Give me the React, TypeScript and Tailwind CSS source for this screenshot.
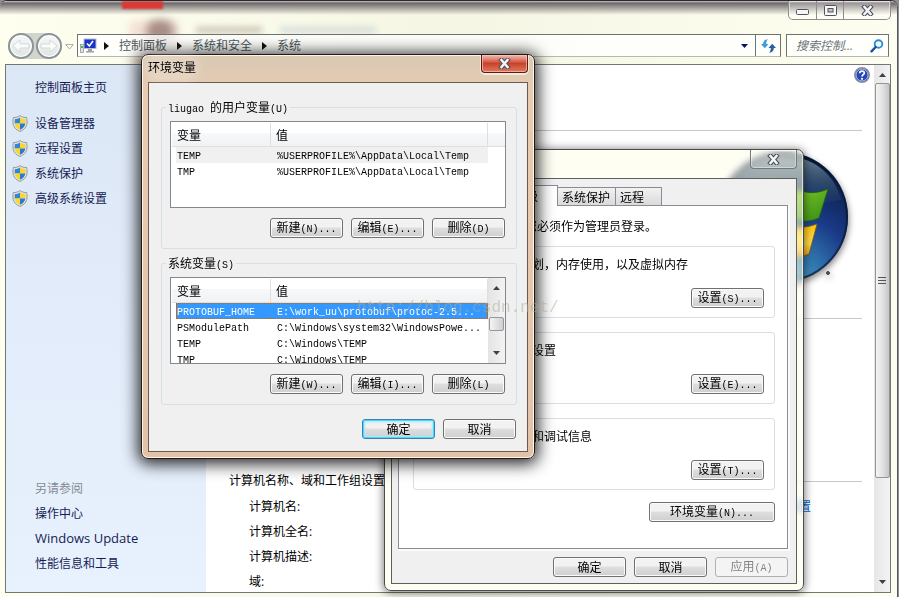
import React, { useState } from 'react';
import clsx from 'clsx';

interface Variable {
  name: string;
  value: string;
}

const userVariables: Variable[] = [
  { name: 'TEMP', value: '%USERPROFILE%\\AppData\\Local\\Temp' },
  { name: 'TMP', value: '%USERPROFILE%\\AppData\\Local\\Temp' },
];

const systemVariables: Variable[] = [
  { name: 'PROTOBUF_HOME', value: 'E:\\work_uu\\protobuf\\protoc-2.5...' },
  { name: 'PSModulePath', value: 'C:\\Windows\\system32\\WindowsPowe...' },
  { name: 'TEMP', value: 'C:\\Windows\\TEMP' },
  { name: 'TMP', value: 'C:\\Windows\\TEMP' },
];

const tasks = ['设备管理器', '远程设置', '系统保护', '高级系统设置'];
const seeAlso = ['操作中心', 'Windows Update', '性能信息和工具'];
const breadcrumbs = ['控制面板', '系统和安全', '系统'];

// Latin runs go in a half-width monospace, Chinese stays at full width
const Mixed: React.FC<{ text: string }> = ({ text }) => (
  <>
    {text.split(/([\x20-\x7e]+)/).filter(Boolean).map((part, i) =>
      /^[\x20-\x7e]+$/.test(part) ? (
        <span key={i} className="font-['Liberation_Mono',monospace] text-[10px] whitespace-pre">{part}</span>
      ) : (
        <span key={i}>{part}</span>
      )
    )}
  </>
);

const CloseGlyph = () => (
  <svg width="13" height="11" viewBox="0 0 13 11" aria-hidden="true">
    <path d="M3.500 2 L9.500 9 M9.500 2 L3.500 9" stroke="#4b4f5e" strokeWidth="4.600" strokeLinecap="square" />
    <path d="M3.500 2 L9.500 9 M9.500 2 L3.500 9" stroke="#f4f4f4" strokeWidth="2.600" strokeLinecap="square" />
  </svg>
);

const Shield = () => (
  <svg width="16" height="17" viewBox="0 0 16 17" className="shrink-0" aria-hidden="true">
    <path d="M8 .6 C6 2 3.600 2.700 1.300 2.500 C1.300 4 .7 5 1 8 C1.300 12 4 15 8 16.400 C12 15 14.700 12 15 8 C15.300 5 14.700 4 14.700 2.500 C12.400 2.700 10 2 8 .6Z" fill="#e2e0d8" stroke="#8d9294" strokeWidth=".9" />
    <path d="M8 2.400 C6.500 3.400 4.700 4 3 4 C2.900 5.500 2.500 7 2.700 8.500 H8Z" fill="#2e86d8" />
    <path d="M8 2.400 C9.500 3.400 11.300 4 13 4 C13.100 5.500 13.500 7 13.300 8.500 H8Z" fill="#fbd628" />
    <path d="M2.700 8.500 C3.100 11.500 5 13.500 8 14.800 V8.500Z" fill="#fbd628" />
    <path d="M13.300 8.500 C12.900 11.500 11 13.500 8 14.800 V8.500Z" fill="#2a7bd0" />
  </svg>
);

const WindowsLogo = () => (
  <svg width="132" height="132" viewBox="0 0 132 132" className="drop-shadow-[1px_3px_3px_rgba(0,0,0,0.45)]" aria-hidden="true">
    <defs>
      <radialGradient id="orb" cx=".48" cy="1.050" r="1">
        <stop offset="0" stopColor="#62c0dc" />
        <stop offset=".28" stopColor="#3580b6" />
        <stop offset=".6" stopColor="#1a3a88" />
        <stop offset="1" stopColor="#071a3e" />
      </radialGradient>
      <linearGradient id="gloss" x1="0" y1="0" x2="0" y2="1">
        <stop offset="0" stopColor="#7f98a6" stopOpacity=".85" />
        <stop offset="1" stopColor="#33566e" stopOpacity=".15" />
      </linearGradient>
      <linearGradient id="green" x1="0" y1="0" x2="1" y2="1">
        <stop offset="0" stopColor="#8fd32c" />
        <stop offset="1" stopColor="#2f8a13" />
      </linearGradient>
      <linearGradient id="yellow" x1="0" y1="0" x2="0" y2="1">
        <stop offset="0" stopColor="#ffc20a" />
        <stop offset=".6" stopColor="#ffdc4a" />
        <stop offset="1" stopColor="#f39a08" />
      </linearGradient>
    </defs>
    <circle cx="65" cy="65" r="65" fill="url(#orb)" />
    <circle cx="65" cy="65" r="64" fill="none" stroke="#081533" strokeWidth="2" opacity=".7" />
    <path d="M8 48 C14 18 38 4 65 4 C93 4 116 20 123 48 C90 54 44 54 8 48Z" fill="url(#gloss)" />
    <path d="M34 34 C47 27 58 28 70 34 L61 64 C49 58 38 58 25 63Z" fill="#e2501d" />
    <path d="M76 36 C87 42 99 42 110 37 L101 66 C90 71 78 70 67 65Z" fill="url(#green)" stroke="#1f5f14" strokeWidth=".8" />
    <path d="M24 69 C36 63 48 64 59 70 L50 100 C39 94 28 94 15 99Z" fill="#2f7fd4" />
    <path d="M65 71 C76 77 88 76 99 72 L91 102 C79 107 67 106 56 101Z" fill="url(#yellow)" stroke="#7a5c10" strokeWidth=".8" />
    <circle cx="110" cy="121" r="1.500" fill="#555" stroke="#444" />
  </svg>
);

const Triangle: React.FC<{ className?: string }> = ({ className }) => (
  <svg width="7" height="4" viewBox="0 0 7 4" className={className} aria-hidden="true">
    <path d="M0 4 L3.500 0 L7 4Z" fill="currentColor" />
  </svg>
);

interface ButtonProps {
  label: string;
  variant?: 'normal' | 'default' | 'wide';
  disabled?: boolean;
}

const Button: React.FC<ButtonProps> = ({ label, variant = 'normal', disabled }) => (
  <button
    type="button"
    disabled={disabled}
    className={clsx(
      'h-5 rounded-[3px] border text-center leading-4 whitespace-nowrap',
      variant === 'wide' ? 'w-[126px]' : 'w-[73px]',
      disabled
        ? 'border-[#adb2b5] bg-[#f4f4f4] text-[#838383]'
        : 'bg-linear-to-b from-[#f2f2f2] from-45% via-[#dedede] via-50% to-[#cfcfcf]',
      !disabled && (variant === 'default'
        ? 'border-[#3c7fb1] shadow-[inset_0_0_0_1px_#48d8fb,inset_0_0_2px_2px_#a5e8fb]'
        : 'border-[#707070] shadow-[inset_0_0_0_1px_#fbfbfb]')
    )}
  >
    <Mixed text={label} />
  </button>
);

interface VariableTableProps {
  label: string;
  rows: Variable[];
  selected?: number;
  highlighted?: number;
  scrollable?: boolean;
}

const VariableTable: React.FC<VariableTableProps> = ({ label, rows, selected, highlighted, scrollable }) => {
  const [current, setCurrent] = useState(selected);

  // The focus ring is a one-pixel checker of orange and the selection blue
  const ring = (i: number) => clsx(
    'h-4 overflow-hidden py-px',
    i === current && 'bg-[repeating-linear-gradient(90deg,#cc6600_0_1px,#3399ff_1px_2px)]',
    i !== current && i === highlighted && 'bg-[#f0f0f0]',
  );
  const text = (i: number) => clsx(
    'h-[14px] leading-3 whitespace-nowrap',
    i === current && 'bg-[#3399ff] text-white',
  );

  return (
    <div className="flex h-[87px] overflow-hidden border border-[#828790] bg-white">
      <div className="flex-1 overflow-hidden pt-px pl-px">
        <table aria-label={label} className="w-full table-fixed border-separate border-spacing-0">
          <thead>
            <tr className="text-left">
              <th className="h-6 w-[99px] border-r border-b border-[#dfdfdf] bg-linear-to-b from-white from-45% via-[#f7f8fa] via-45% to-[#f1f2f4] pl-[5px] font-normal">变量</th>
              <th className="h-6 border-r border-b border-[#dfdfdf] bg-linear-to-b from-white from-45% via-[#f7f8fa] via-45% to-[#f1f2f4] pl-[5px] font-normal">值</th>
              {!scrollable && (
                <td className="w-[17px] border-b border-[#dfdfdf] bg-linear-to-b from-white from-45% via-[#f7f8fa] via-45% to-[#f1f2f4]" />
              )}
            </tr>
          </thead>
          <tbody>
            {rows.map((row, i) => (
              <tr key={row.name} onClick={() => setCurrent(i)}>
                <td className="p-0 pl-1"><div className={clsx(ring(i), 'pl-px')}><div className={text(i)}><Mixed text={row.name} /></div></div></td>
                <td className="p-0"><div className={clsx(ring(i), 'pr-px')}><div className={clsx(text(i), 'pl-1.5')}><Mixed text={row.value} /></div></div></td>
              </tr>
            ))}
          </tbody>
        </table>
      </div>
      {scrollable && (
        <div className="flex w-[17px] flex-col items-center bg-linear-to-r from-[#e4e4e4] to-[#f3f3f3] py-2 text-[#404040]" aria-hidden="true">
          <Triangle />
          <div className="mt-[27px] h-[14px] w-[15px] rounded-xs border border-[#979797] bg-linear-to-r from-[#f5f5f5] to-[#cfcfd2]" />
          <Triangle className="mt-auto rotate-180" />
        </div>
      )}
    </div>
  );
};

const EnvironmentDialog = () => (
  <section
    aria-label="环境变量"
    className="absolute top-[54px] left-[141px] w-[394px] rounded-[7px] border border-[#1f1a18] bg-linear-to-b from-[#dcc9b4] from-2% via-[#e8ccb0] via-10% to-[#e3c3a8] px-1.5 pb-1.5 shadow-[0_2px_16px_3px_rgba(0,0,0,0.85),inset_0_0_0_1px_#fff5ea]"
  >
    <header className="flex h-[27px] items-start justify-between">
      <h2 className="rounded-full bg-white/20 leading-6 shadow-[0_0_8px_4px_rgba(255,255,255,0.2)]">环境变量</h2>
      <button type="button" aria-label="关闭" className="flex h-[18px] w-[47px] items-center justify-center rounded-b-[4px] border border-t-0 border-[#5b1c18] bg-linear-to-b from-[#eaa79c] from-10% via-[#c9412b] via-50% to-[#dd7a5c] shadow-[inset_0_0_0_1px_rgba(255,210,200,0.6),0_1px_0_1px_rgba(255,245,235,0.7)]">
        <CloseGlyph />
      </button>
    </header>
    <div className="border border-[#6b5a50] bg-[#f0f0f0] pt-4 pr-2.5 pb-3 pl-3">
      <fieldset className="min-w-0 rounded-[3px] border border-[#d5dfe5] px-2 pt-1.5 pr-2.5 pb-2.5">
        <legend className="h-4 -ml-1 px-0.5 leading-4"><Mixed text="liugao 的用户变量(U)" /></legend>
        <VariableTable label="用户变量" rows={userVariables} highlighted={0} />
        <div className="mt-2.5 flex justify-end gap-2 pr-px">
          <Button label="新建(N)..." />
          <Button label="编辑(E)..." />
          <Button label="删除(D)" />
        </div>
      </fieldset>
      <fieldset className="mt-1.5 min-w-0 rounded-[3px] border border-[#d5dfe5] px-2 pt-1.5 pr-2.5 pb-2.5">
        <legend className="h-4 -ml-1 px-0.5 leading-4"><Mixed text="系统变量(S)" /></legend>
        <VariableTable label="系统变量" rows={systemVariables} selected={0} scrollable />
        <div className="mt-2.5 flex justify-end gap-2 pr-px">
          <Button label="新建(W)..." />
          <Button label="编辑(I)..." />
          <Button label="删除(L)" />
        </div>
      </fieldset>
      <div className="mt-[14px] flex justify-end gap-2 pr-px">
        <Button label="确定" variant="default" />
        <Button label="取消" />
      </div>
    </div>
  </section>
);

const SettingsGroup: React.FC<{ title: string; text: string; action: string }> = ({ title, text, action }) => (
  <fieldset className="min-w-0 rounded-[3px] border border-[#d5dfe5] px-2.5 pb-2">
    <legend className="h-4 px-0.5 leading-4">{title}</legend>
    <p className="leading-5">{text}</p>
    <div className="mt-[14px] mb-px flex justify-end"><Button label={action} /></div>
  </fieldset>
);

const SystemPropertiesDialog = () => (
  <section
    aria-label="系统属性"
    className="absolute top-[149px] left-[384px] w-[420px] rounded-[7px] border border-[#4a4a48] bg-[#fdfde8]/50 px-1.5 pb-1.5 shadow-[0_1px_8px_1px_rgba(0,0,0,0.5),inset_0_0_0_1px_rgba(255,255,255,0.6)] backdrop-blur-[3px]"
  >
    <header className="flex h-7 items-start justify-between">
      <h2 className="leading-[26px]">系统属性</h2>
      <button type="button" aria-label="关闭" className="flex h-[19px] w-[47px] items-center justify-center rounded-b-[4px] border border-t-0 border-[#77777a] bg-white/10 shadow-[inset_0_0_0_1px_rgba(255,255,255,0.4)]">
        <CloseGlyph />
      </button>
    </header>
    <div className="border border-[#5e5e5c] bg-[#f0f0f0] pt-1.5 pr-2 pb-1.5 pl-1.5">
      <div role="tablist" className="flex h-5 items-end pl-0.5 leading-[18px]">
        <button type="button" role="tab" aria-selected="false" className="h-[18px] w-[60px] border border-b-0 border-[#898c95] bg-linear-to-b from-[#f2f2f2] to-[#dadada] pl-1 text-left">计算机名</button>
        <button type="button" role="tab" aria-selected="false" className="h-[18px] w-[49px] border border-b-0 border-[#898c95] bg-linear-to-b from-[#f2f2f2] to-[#dadada] pl-1 text-left">硬件</button>
        <button type="button" role="tab" aria-selected="true" className="relative top-px h-[21px] w-[49px] border border-b-0 border-[#898c95] bg-white pl-1 text-left">高级</button>
        <button type="button" role="tab" aria-selected="false" className="h-[18px] w-[58px] border border-b-0 border-l-0 border-[#898c95] bg-linear-to-b from-[#f2f2f2] to-[#dadada] pl-1 text-left whitespace-nowrap">系统保护</button>
        <button type="button" role="tab" aria-selected="false" className="h-[18px] w-[46px] border border-b-0 border-l-0 border-[#898c95] bg-linear-to-b from-[#f2f2f2] to-[#dadada] pl-1 text-left">远程</button>
      </div>
      <div role="tabpanel" className="border border-[#898c95] bg-white pt-2.5 pr-3 pb-[26px] pl-[14px] shadow-[1px_1px_0_1px_#fafafa]">
        <p className="mb-0.5 pl-1 leading-5">要进行大多数更改，您必须作为管理员登录。</p>
        <div className="flex flex-col gap-1.5">
          <SettingsGroup title="性能" text="视觉效果，处理器计划，内存使用，以及虚拟内存" action="设置(S)..." />
          <SettingsGroup title="用户配置文件" text="与您登录有关的桌面设置" action="设置(E)..." />
          <SettingsGroup title="启动和故障恢复" text="系统启动、系统失败和调试信息" action="设置(T)..." />
        </div>
        <div className="mt-3 flex justify-end"><Button label="环境变量(N)..." variant="wide" /></div>
      </div>
      <div className="mt-2 flex justify-end gap-2">
        <Button label="确定" />
        <Button label="取消" />
        <Button label="应用(A)" disabled />
      </div>
    </div>
  </section>
);

const NavButton: React.FC<{ label: string; forward?: boolean }> = ({ label, forward }) => (
  <button type="button" aria-label={label} className="flex size-[26px] items-center justify-center rounded-full border-2 border-[#8b9499] bg-linear-to-b from-[#f7f9f8] to-[#dfe5e3] shadow-[inset_0_0_0_1px_#fff]">
    <svg width="18" height="14" viewBox="0 0 18 14" className={clsx(forward && 'rotate-180')} aria-hidden="true">
      <path d="M1 7 L8 1 V5 H17 V9 H8 V13Z" fill="#fbfcfc" stroke="#d3d9d8" strokeWidth="1" />
    </svg>
  </button>
);

const AddressBar = () => (
  <nav className="relative flex h-[30px] items-start pr-2 pl-2" aria-label="地址">
    <div className="-mt-px flex gap-0.5 rounded-full bg-[#d2d5cc]">
      <NavButton label="后退" />
      <NavButton label="前进" forward />
    </div>
    <svg width="9" height="6" viewBox="0 0 9 6" className="mx-[3px] mt-2.5" aria-hidden="true">
      <path d="M.7 .6 H8.300 L4.500 5Z" fill="#fff" stroke="#a9ada2" />
    </svg>
    <div className="flex h-[23px] flex-1 border border-[#6f7370] border-b-[#b5b9b1] bg-white/80">
      <div className="flex flex-1 items-center pl-0.5 text-[#4c5860]">
        <svg width="17" height="16" viewBox="0 0 17 16" className="-mr-[3px]" aria-hidden="true">
          <rect x=".5" y="6.500" width="3" height="8" fill="#dfe6e0" stroke="#7f8a86" strokeWidth=".7" />
          <rect x="1" y="8" width="2" height="2" fill="#3fbf3f" />
          <rect x="4" y="1" width="12" height="9.500" fill="#1a33c8" stroke="#b7bec8" />
          <path d="M7 5.500 L9.300 8 L13 3" fill="none" stroke="#fff" strokeWidth="1.600" />
          <path d="M8 11 H12 V13 H14 V14.500 H6 V13 H8Z" fill="#9ba3ab" />
        </svg>
        {breadcrumbs.map(crumb => (
          <React.Fragment key={crumb}>
            <svg width="5" height="8" viewBox="0 0 5 8" className="mx-2.5" aria-hidden="true">
              <path d="M0 0 L5 4 L0 8Z" fill="#111" />
            </svg>
            <a href="#" className="leading-5">{crumb}</a>
          </React.Fragment>
        ))}
        <Triangle className="mr-[7px] ml-auto rotate-180 text-[#0a1160]" />
      </div>
      <button type="button" aria-label="刷新" className="flex w-[25px] items-center justify-center border-l border-[#6f7370]">
        <svg width="15" height="14" viewBox="0 0 15 14" aria-hidden="true">
          <path d="M7 .3 C3.500 .6 2.200 2.500 2.200 5 H0 L3.800 9.300 L7.500 5 H5.200 C5.200 3.200 5.500 1.600 7 .3Z" fill="#3c9bdc" />
          <path d="M8 13.700 C11.500 13.400 12.800 11.500 12.800 9 H15 L11.200 4.700 L7.500 9 H9.800 C9.800 10.800 9.500 12.400 8 13.700Z" fill="#2560a8" />
        </svg>
      </button>
    </div>
    <div className="ml-[5px] flex h-[23px] w-[103px] items-center border border-[#6f7370] border-b-[#b5b9b1] bg-white/80 pr-1 pl-[9px]">
      <input type="text" aria-label="搜索控制面板" placeholder="搜索控制..." className="w-0 flex-1 italic outline-none placeholder:text-[#6d7276]" />
      <svg width="14" height="14" viewBox="0 0 14 14" aria-hidden="true">
        <circle cx="8.500" cy="5" r="3.800" fill="#eef8fd" stroke="#2c8ccc" strokeWidth="1.900" />
        <path d="M5.700 8 L1.500 12.300" stroke="#1b4f9c" strokeWidth="2.400" strokeLinecap="round" />
      </svg>
    </div>
  </nav>
);

const Sidebar = () => (
  <aside className="flex w-[200px] shrink-0 flex-col justify-between bg-linear-to-b from-[#dce7f5] via-[#e2ecfa] to-[#e8f2fe] pt-2.5 pb-4 leading-[25px] text-[#151c55]">
    <div>
      <a href="#" className="block pl-[29px]">控制面板主页</a>
      <ul className="mt-[11px]">
        {tasks.map(task => (
          <li key={task}>
            <a href="#" className="flex items-center gap-[7px] pl-1.5"><Shield />{task}</a>
          </li>
        ))}
      </ul>
    </div>
    <div className="pl-[29px]">
      <h2 className="text-[#858a92]">另请参阅</h2>
      <ul>
        {seeAlso.map(item => (
          <li key={item}><a href="#" className={clsx('block', item === 'Windows Update' && 'text-[13px]')}>{item}</a></li>
        ))}
      </ul>
    </div>
  </aside>
);

const SectionTitle: React.FC<{ title: string }> = ({ title }) => (
  <h3 className="flex items-center leading-5 whitespace-nowrap">
    {title}
    <span className="ml-1 h-px flex-1 bg-[#c8c8c8]" />
  </h3>
);

const SystemPage = () => (
  <main className="min-w-0 flex-1 overflow-hidden bg-white pt-[5px] pr-3 pl-[23px]">
    <div className="flex h-[50px] items-start justify-between">
      <h1 className="pt-5 leading-5 text-[#003399]">查看有关计算机的基本信息</h1>
      <button type="button" aria-label="帮助" className="-mt-[3px] -mr-2 size-4">
        <svg width="16" height="16" viewBox="0 0 16 16" aria-hidden="true">
          <circle cx="8" cy="8" r="7.300" fill="#2548b8" stroke="#8b8f98" strokeWidth="1.400" />
          <circle cx="8" cy="8" r="6" fill="none" stroke="#d4dcf2" strokeWidth=".8" />
          <path d="M5.700 6.200 C5.700 3.400 10.300 3.400 10.300 6 C10.300 7.600 8 7.700 8 9.600" fill="none" stroke="#fff" strokeWidth="1.700" />
          <circle cx="8" cy="11.800" r="1.100" fill="#fff" />
        </svg>
      </button>
    </div>
    <section className="h-[188px]">
      <SectionTitle title="Windows 版本" />
      <div className="flex justify-end pt-3 pr-3"><WindowsLogo /></div>
    </section>
    <section className="h-[163px]">
      <SectionTitle title="系统" />
    </section>
    <section>
      <SectionTitle title="计算机名称、域和工作组设置" />
      <div className="mt-[3px] flex justify-between pr-[51px] pl-5 leading-[25px]">
        <dl>
          <dt>计算机名:</dt>
          <dt>计算机全名:</dt>
          <dt>计算机描述:</dt>
          <dt>域:</dt>
        </dl>
        <a href="#" className="text-[#0066cc]">更改设置</a>
      </div>
    </section>
  </main>
);

export default function App() {
  return (
    <div className="relative flex h-screen min-h-[597px] overflow-hidden bg-[#8a9094] pr-px text-[12px] text-black font-['Open_Sans','Noto_Sans_CJK_SC',sans-serif]">
      <div className="relative flex flex-1 flex-col overflow-hidden rounded-t-[7px] border-t border-r border-t-[#2b292b] border-r-[#55595a] bg-linear-to-r from-[#fffff0] via-[#f5f6e4] to-[#fefef0] pb-1">
        <div className="absolute inset-x-0 top-0 h-3.5 bg-linear-to-b from-[#cbc7c9] via-[#6f676a] via-15% to-transparent" />
        <div className="absolute top-0 left-[122px] h-2 w-[41px] bg-[#d93a34] blur-[1px]" />
        <div className="absolute top-5 left-[146px] h-5 w-7 rounded-full bg-[#4a3634]/70 blur-[4px]" />
        <div className="absolute top-5 left-[130px] h-10 w-12 bg-[#e9b7ad]/40 blur-[4px]" />
        <div className="absolute top-[26px] left-[196px] h-1.5 w-[66px] bg-[#a08c80]/50 blur-[3px]" />
        <div className="absolute top-[26px] left-[280px] h-1.5 w-[96px] bg-[#9fb6bd]/40 blur-[3px]" />

        <header className="relative flex h-[33px] items-start justify-end pr-1.5">
          <div className="flex h-[19px] rounded-b-[5px] border border-t-0 border-[#8e8c8c] bg-white/30 shadow-[inset_0_0_0_1px_rgba(255,255,255,0.45)]">
            <button type="button" aria-label="最小化" className="flex w-7 items-center justify-center border-r border-[#8e8c8c]">
              <svg width="13" height="6" viewBox="0 0 13 6" className="mt-1" aria-hidden="true"><rect x=".5" y=".5" width="12" height="5" rx="1" fill="#f6f6f6" stroke="#50535f" /></svg>
            </button>
            <button type="button" aria-label="最大化" className="flex w-[27px] items-center justify-center border-r border-[#8e8c8c]">
              <svg width="13" height="11" viewBox="0 0 13 11" aria-hidden="true">
                <rect x=".5" y=".5" width="12" height="10" rx="1" fill="#f6f6f6" stroke="#50535f" />
                <rect x="4" y="3.500" width="5" height="3.500" fill="#c9c5bd" stroke="#50535f" />
              </svg>
            </button>
            <button type="button" aria-label="关闭" className="flex w-[46px] items-center justify-center"><CloseGlyph /></button>
          </div>
        </header>

        <AddressBar />

        <div className="relative mr-1.5 ml-[5px] flex min-h-0 flex-1 border border-[#747673] bg-white">
          <Sidebar />
          <SystemPage />
          <div className="flex w-4 shrink-0 flex-col items-center bg-linear-to-r from-[#e6e6e6] to-[#f3f3f3] py-2 text-[#404040]" aria-hidden="true">
            <Triangle />
            <div className="mt-1.5 mb-[102px] flex w-[15px] flex-1 flex-col items-center justify-center gap-0.5 rounded-xs border border-[#959595] bg-linear-to-r from-[#f5f5f5] via-[#e2e2e4] to-[#c5c5c9]">
              <span className="h-px w-2 bg-[#555]" />
              <span className="h-px w-2 bg-[#555]" />
              <span className="h-px w-2 bg-[#555]" />
            </div>
            <Triangle className="rotate-180" />
          </div>
        </div>
      </div>

      <div className="font-['Noto_Sans_CJK_SC',sans-serif]">
        <SystemPropertiesDialog />
        <EnvironmentDialog />
      </div>

      <p className="pointer-events-none absolute top-[298px] left-[357px] font-['Liberation_Mono',monospace] text-[16px] leading-5 whitespace-nowrap text-[#a9a999]/50">http://blog.csdn.net/</p>
    </div>
  );
}
